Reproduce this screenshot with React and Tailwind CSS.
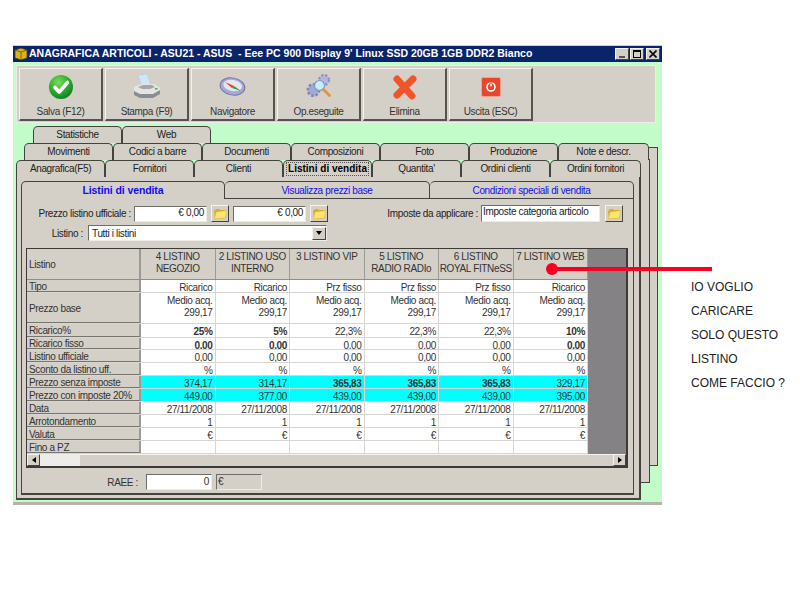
import React from 'react'

const raised = 'border border-t-[#f4f3f0] border-l-[#f4f3f0] border-r-[#45433f] border-b-[#45433f]'
const sunken = 'border border-t-[#6f6d69] border-l-[#6f6d69] border-r-[#eeece8] border-b-[#eeece8]'

const CheckIcon = () => (
    <svg width="26" height="26" viewBox="0 0 26 26">
        <defs>
            <radialGradient id="gr" cx="40%" cy="30%" r="75%">
                <stop offset="0" stopColor="#7fdc5c" />
                <stop offset="0.6" stopColor="#27a82c" />
                <stop offset="1" stopColor="#0c7a24" />
            </radialGradient>
        </defs>
        <circle cx="13" cy="13" r="12" fill="url(#gr)" />
        <path d="M7 13.5l4.2 4.5L19.5 8.5" fill="none" stroke="#fff" strokeWidth="3.6" strokeLinecap="round" strokeLinejoin="round" />
    </svg>
)

const PrinterIcon = () => (
    <svg width="28" height="26" viewBox="0 0 28 26">
        <path d="M5 1l9-1 4 11-9 2z" fill="#cfe6f8" stroke="#a8c4da" strokeWidth="0.5" />
        <path d="M1 13l7-3h13l6 4v5l-7 4H7l-6-3z" fill="#e4e5e2" />
        <path d="M1 17l6 3h13l7-4v4l-7 4H7l-6-3z" fill="#8a8d92" />
        <path d="M5 13l5-2h9l3 2-5 2H9z" fill="#a3a7a9" />
        <rect x="22" y="14" width="2.5" height="1.5" fill="#3fb34f" />
    </svg>
)

const CompassIcon = () => (
    <svg width="27" height="21" viewBox="0 0 27 21">
        <g transform="rotate(10 13.5 10.5)">
            <ellipse cx="13.5" cy="10.5" rx="12.5" ry="8.5" fill="#a6a7d8" stroke="#75769f" />
            <ellipse cx="13.5" cy="9.5" rx="9.5" ry="5.5" fill="#e4e6ee" />
        </g>
        <path d="M6 6l9 4-2 2z" fill="#d8452c" />
        <path d="M13 12l2-2 7 5z" fill="#2f9a44" />
    </svg>
)

const GearsIcon = () => (
    <svg width="27" height="27" viewBox="0 0 27 27">
        <circle cx="8.5" cy="17" r="5.5" fill="#a3a8d6" stroke="#7f85bd" strokeWidth="3" strokeDasharray="2.5 1.6" />
        <circle cx="8.5" cy="17" r="4.5" fill="#a3a8d6" />
        <circle cx="19" cy="7" r="4.5" fill="#b4b8dc" stroke="#8c91c4" strokeWidth="3" strokeDasharray="2.2 1.4" />
        <circle cx="19" cy="7" r="3.8" fill="#b4b8dc" />
        <circle cx="14.5" cy="12.5" r="5" fill="#c9ecfa" stroke="#7f9cc0" strokeWidth="1.2" />
        <path d="M18.5 16.5l6 6" stroke="#e9903a" strokeWidth="2.8" strokeLinecap="round" />
    </svg>
)

const CrossIcon = () => (
    <svg width="27" height="26" viewBox="0 0 27 26">
        <path d="M6 5l15 17M22 5L6 21" fill="none" stroke="#f0552a" strokeWidth="7" strokeLinecap="round" />
    </svg>
)

const PowerIcon = () => (
    <div className="w-5 h-5 rounded-[2px] bg-[#e5482c] border border-[#f4a08e] flex items-center justify-center">
        <svg width="12" height="12" viewBox="0 0 12 12">
            <circle cx="6" cy="6" r="4" fill="none" stroke="#fff" strokeWidth="1.6" />
            <path d="M6 1.5v4" stroke="#e5482c" strokeWidth="3" />
            <path d="M6 2.5v3" stroke="#fff" strokeWidth="1.3" />
        </svg>
    </div>
)

const FolderIcon = () => (
    <svg width="14" height="13" viewBox="0 0 14 13">
        <path d="M1 4l2-2h3l1 1h6v8L2 12z" fill="#e0ac22" />
        <path d="M1.5 12L3 5l10.5-1.5-1 7.500z" fill="#fce56e" stroke="#d9a824" strokeWidth="0.4" />
    </svg>
)

const FolderButton = () => (
    <div className={`w-[18px] h-[17px] shrink-0 flex items-center justify-center bg-[#d4d0c8] ${raised}`}>
        <FolderIcon />
    </div>
)

const toolbar = [
    { label: 'Salva (F12)', icon: <CheckIcon /> },
    { label: 'Stampa (F9)', icon: <PrinterIcon /> },
    { label: 'Navigatore', icon: <CompassIcon /> },
    { label: 'Op.eseguite', icon: <GearsIcon /> },
    { label: 'Elimina', icon: <CrossIcon /> },
    { label: 'Uscita (ESC)', icon: <PowerIcon /> },
]

const Tab = ({ label, width, active }) => (
    <div
        className="h-[17px] pb-px shrink-0 flex items-center justify-center bg-[#d4d0c8] rounded-t-[5px] border-t border-l border-r border-[#45433f] text-[10px] text-[#222] whitespace-nowrap"
        style={{ width }}
    >
        {active
            ? <span className="font-bold tracking-normal px-[1px] border border-dotted border-[#555] leading-[12px] text-black">{label}</span>
            : label}
    </div>
)

const columns = [
    '4 LISTINO NEGOZIO', '2 LISTINO USO INTERNO', '3 LISTINO VIP',
    '5 LISTINO RADIO RADIo', '6 LISTINO ROYAL FITNeSS', '7 LISTINO WEB',
]

// una riga per voce: h = altezza, bold = colonne in grassetto, cyan = sfondo
const rows = [
    { name: 'Tipo', h: 'h-[13px]', cells: ['Ricarico', 'Ricarico', 'Prz fisso', 'Prz fisso', 'Prz fisso', 'Ricarico'] },
    { name: 'Prezzo base', h: 'h-[31px]', tall: true, cells: Array(6).fill('299,17') },
    { name: 'Ricarico%', h: 'h-[14px]', bold: [0, 1, 5], cells: ['25%', '5%', '22,3%', '22,3%', '22,3%', '10%'] },
    { name: 'Ricarico fisso', h: 'h-[12px]', bold: [0, 1, 5], cells: Array(6).fill('0,00') },
    { name: 'Listino ufficiale', h: 'h-[13px]', cells: Array(6).fill('0,00') },
    { name: 'Sconto da listino uff.', h: 'h-[13px]', cells: Array(6).fill('%') },
    { name: 'Prezzo senza imposte', h: 'h-[13px]', cyan: true, bold: [2, 3, 4], cells: ['374,17', '314,17', '365,83', '365,83', '365,83', '329,17'] },
    { name: 'Prezzo con imposte 20%', h: 'h-[13px]', cyan: true, cells: ['449,00', '377,00', '439,00', '439,00', '439,00', '395,00'] },
    { name: 'Data', h: 'h-[13px]', cells: Array(6).fill('27/11/2008') },
    { name: 'Arrotondamento', h: 'h-[13px]', cells: Array(6).fill('1') },
    { name: 'Valuta', h: 'h-[13px]', cells: Array(6).fill('€') },
    { name: 'Fino a PZ', h: 'h-[13px]', cells: Array(6).fill('') },
]

const Grid = () => (
    <div className="mt-[7px] ml-[4px] w-[602px] border-t border-l border-r-2 border-b-2 border-[#3c3a38] bg-[#848284]">
        <div className="w-[561px]">
            <div className="flex h-[31px] border-b border-[#8f8d89] bg-[#d4d0c8]">
                <div className="w-[114px] shrink-0 pl-[2px] flex items-center border-r-2 border-[#9c9a96] text-[10px] text-[#333]">Listino</div>
                {columns.map((c) => (
                    <div key={c} className="flex-1 min-w-0 pt-[2px] text-center text-[10px] leading-[12px] border-r border-[#9c9a96] text-[#333]">{c}</div>
                ))}
            </div>
            {rows.map((r) => (
                <div key={r.name} className={`flex ${r.h} border-b border-[#d8d6d2] overflow-hidden`}>
                    <div className="w-[114px] shrink-0 pl-[2px] pt-[2px] flex items-center bg-[#d4d0c8] border-r-2 border-[#9c9a96] border-b border-b-[#77756f] text-[10px] text-[#333] leading-none whitespace-nowrap">{r.name}</div>
                    {r.cells.map((v, i) => (
                        <div
                            key={i}
                            className={`flex-1 min-w-0 pr-[2px] text-right text-[10px] text-[#333] border-r border-[#d8d6d2] ${r.tall ? 'pt-[2px] leading-[12px]' : 'leading-[15px]'} ${r.cyan ? 'bg-[#00ffff]' : 'bg-white'} ${r.bold && r.bold.includes(i) ? 'font-bold text-[#111]' : ''}`}
                        >
                            {r.tall && <div>Medio acq.</div>}
                            <div>{v}</div>
                        </div>
                    ))}
                </div>
            ))}
        </div>
        <div className="flex h-[12px] bg-[#d4d0c8]">
            <div className={`w-[13px] h-[12px] flex items-center justify-center bg-[#d4d0c8] ${raised}`}>
                <div className="w-0 h-0 border-y-[3px] border-y-transparent border-r-[4px] border-r-black" />
            </div>
            <div className="w-[40px] bg-[#eeece8]" />
            <div className="flex-1 bg-[#d4d0c8] border-t border-[#f4f3f0]" />
            <div className={`w-[13px] h-[12px] flex items-center justify-center bg-[#d4d0c8] ${raised}`}>
                <div className="w-0 h-0 border-y-[3px] border-y-transparent border-l-[4px] border-l-black" />
            </div>
        </div>
    </div>
)

const InnerPane = () => (
    <div className="w-[613px]">
        <div className="flex h-[18px]">
            <div className="w-[204px] rounded-t-[5px] border-t border-l border-r border-[#45433f] bg-[#d4d0c8] flex items-center justify-center text-[10.5px] font-bold tracking-[-0.1px] text-[#0f0ff0] z-10">Listini di vendita</div>
            <div className="w-[205px] rounded-t-[5px] border-t border-r border-b border-[#45433f] bg-[#d4d0c8] flex items-center justify-center text-[10px] text-[#0f0ff0]">Visualizza prezzi base</div>
            <div className="w-[204px] rounded-t-[5px] border-t border-r border-b border-[#45433f] bg-[#d4d0c8] flex items-center justify-center text-[10px] text-[#0f0ff0]">Condizioni speciali di vendita</div>
        </div>
        <div className="h-[297px] -mt-px pt-[7px] bg-[#d4d0c8] border-l border-r border-b-2 border-[#45433f] border-t-0">
            <div className="flex items-center h-[17px] pr-[10px] text-[10px] text-[#222]">
                <div className="w-[112px] text-right pr-[3px] shrink-0">Prezzo listino ufficiale :</div>
                <div className={`w-[73px] h-[16px] bg-white text-right pr-[2px] leading-[12px] ${sunken}`}>€ 0,00</div>
                <div className="w-[4px]" />
                <FolderButton />
                <div className="w-[4px]" />
                <div className={`w-[73px] h-[16px] bg-white text-right pr-[2px] leading-[12px] ${sunken}`}>€ 0,00</div>
                <div className="w-[4px]" />
                <FolderButton />
                <div className="flex-1 text-right pr-[3px] whitespace-nowrap">Imposte da applicare :</div>
                <div className={`w-[119px] h-[17px] bg-white pl-[1px] leading-[12px] ${sunken}`}>Imposte categoria articolo</div>
                <div className="w-[5px]" />
                <FolderButton />
            </div>
            <div className="flex items-center h-[16px] mt-[3px] text-[10px] text-[#222]">
                <div className="w-[66px] text-right pr-[5px] shrink-0">Listino :</div>
                <div className={`w-[239px] h-[16px] bg-white flex items-center justify-between pl-[3px] ${sunken}`}>
                    Tutti i listini
                    <div className={`w-[14px] h-[13px] flex items-center justify-center bg-[#d4d0c8] ${raised}`}>
                        <div className="w-0 h-0 border-x-[3.5px] border-x-transparent border-t-[4px] border-t-black" />
                    </div>
                </div>
            </div>
            <Grid />
            <div className="flex items-center h-[16px] mt-[6px] text-[10px] text-[#333]">
                <div className="w-[116px] text-right shrink-0">RAEE :</div>
                <div className={`ml-[8px] w-[66px] h-[16px] bg-white text-right pr-[2px] leading-[14px] ${sunken}`}>0</div>
                <div className={`ml-[4px] w-[46px] h-[16px] bg-[#d4d0c8] pl-[1px] leading-[14px] ${sunken}`}>€</div>
            </div>
        </div>
    </div>
)

const App = () => {
    const row2 = ['Movimenti', 'Codici a barre', 'Documenti', 'Composizioni', 'Foto', 'Produzione', 'Note e descr.']
    const row3 = ['Anagrafica(F5)', 'Fornitori', 'Clienti', 'Listini di vendita', "Quantita'", 'Ordini clienti', 'Ordini fornitori']

    return (
        <div className="relative w-[800px] h-[600px] bg-white overflow-hidden font-['Liberation_Sans',Arial,sans-serif]">
            <div className="w-[649px] h-[460px] ml-[13px] mt-[45px] bg-[#c2fcc8] border-t border-t-[#d4d0c8] border-b-[3px] border-b-[#b4b3ae] inline-block align-top tracking-[-0.35px]">
                <div className="h-[16px] bg-[#0a246a] flex items-center text-white text-[10.5px] font-bold tracking-normal whitespace-pre">
                    <svg className="ml-[1px] mr-[1px] shrink-0" width="14" height="14" viewBox="0 0 14 14">
                        <path d="M1 3l6-2 6 2v8l-6 2-6-2z" fill="#d9b21e" stroke="#4a3c08" strokeWidth="0.8" />
                        <path d="M1 3l6 2 6-2M7 5v8" fill="none" stroke="#6a5610" strokeWidth="0.8" />
                    </svg>
                    <span className="flex-1">ANAGRAFICA ARTICOLI - ASU21 - ASUS  - Eee PC 900 Display 9' Linux SSD 20GB 1GB DDR2 Bianco</span>
                    <div className="flex gap-[1px] mr-[2px]">
                        <div className={`w-[14px] h-[12px] bg-[#d4d0c8] flex items-end pl-[3px] pb-[1px] ${raised}`}>
                            <div className="w-[6px] h-[2px] bg-[#555]" />
                        </div>
                        <div className={`w-[14px] h-[12px] bg-[#d4d0c8] flex items-center justify-center ${raised}`}>
                            <div className="w-[8px] h-[8px] border border-t-2 border-black" />
                        </div>
                        <div className={`w-[14px] h-[12px] bg-[#d4d0c8] flex items-center justify-center ml-[1px] ${raised}`}>
                            <svg width="8" height="8" viewBox="0 0 8 8">
                                <path d="M0.5 0.5l7 7M7.5 0.5l-7 7" stroke="#000" strokeWidth="1.6" />
                            </svg>
                        </div>
                    </div>
                </div>

                <div className="mt-[3px] ml-[3px] w-[640px] h-[58px] pt-[2px] pl-[2px] flex gap-[2px] bg-[#d4d0c8] border border-[#eeece8]">
                    {toolbar.map((b) => (
                        <div key={b.label} className="w-[84px] h-[53px] flex flex-col items-center bg-[#d4d0c8] border border-t-[#f4f3f0] border-l-[#f4f3f0] border-r-2 border-b-2 border-r-[#55534f] border-b-[#55534f]">
                            <div className="h-[37px] flex items-center justify-center">{b.icon}</div>
                            <div className="text-[10px] text-[#333]">{b.label}</div>
                        </div>
                    ))}
                </div>

                <div className="relative mt-[3px] h-[377px]">
                    {/* fogli dietro le schede */}
                    <div className="absolute left-[620px] top-[21px] w-[25px] h-[319px] bg-[#d4d0c8] border-t border-r border-b border-[#45433f]" />
                    <div className="absolute left-[612px] top-[33px] w-[25px] h-[324px] bg-[#d4d0c8] border-r border-b border-[#45433f]" />

                    <div className="relative flex ml-[20px]">
                        <Tab label="Statistiche" width="89px" />
                        <Tab label="Web" width="89px" />
                    </div>
                    <div className="relative flex ml-[11px]">
                        {row2.map((t, i) => (
                            <Tab key={t} label={t} width={i === 6 ? '91px' : '89px'} />
                        ))}
                    </div>
                    <div className="relative flex ml-[3px]">
                        {row3.map((t, i) => (
                            <Tab key={t} label={t} width={i === 6 ? '91px' : '89px'} active={t === 'Listini di vendita'} />
                        ))}
                    </div>
                    <div className="relative ml-[3px] w-[625px] h-[323px] pt-[4px] pl-[4px] bg-[#d4d0c8] border-l border-r-2 border-b-2 border-[#45433f]">
                        <InnerPane />
                    </div>
                </div>
            </div>

            {/* freccia rossa sopra la griglia */}
            <div className="absolute left-[546px] top-[263px] w-[12px] h-[12px] rounded-full bg-[#f70022]" />
            <div className="absolute left-[552px] top-[267px] w-[160px] h-[4px] bg-[#f70022]" />

            <div className="absolute left-[691px] top-[275px] flex flex-col text-[12px] leading-[24px] text-[#222] whitespace-nowrap">
                <div>IO VOGLIO</div>
                <div>CARICARE</div>
                <div>SOLO QUESTO</div>
                <div>LISTINO</div>
                <div>COME FACCIO ?</div>
            </div>
        </div>
    )
}

export default App
